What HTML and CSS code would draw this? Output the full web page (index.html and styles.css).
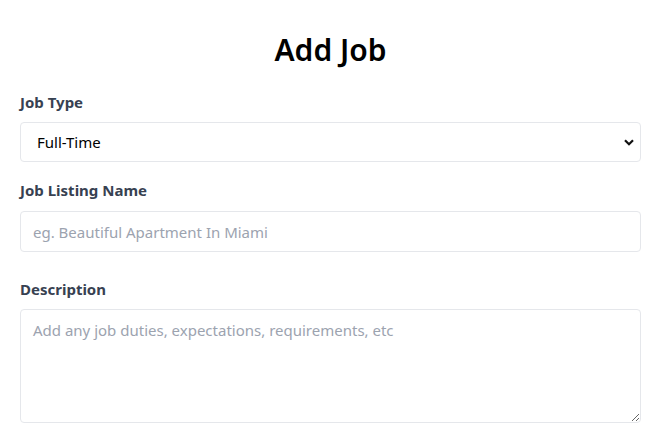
FILE: index.html
```html
<!DOCTYPE html>
<html lang="en">
<head>
<meta charset="utf-8">
<title>Add Job</title>
<link rel="stylesheet" href="styles.css">
</head>
<body>
<main class="page">
  <h1 class="title">Add Job</h1>
  <form class="form">
    <div class="field">
      <label class="label" for="type">Job Type</label>
      <div class="select-wrap">
        <select id="type" class="control select">
          <option>Full-Time</option>
          <option>Part-Time</option>
        </select>
        <svg class="chev" width="10" height="7" viewBox="0 0 10 7"><path d="M1 1.2 L5 5.2 L9 1.2" fill="none" stroke="#111" stroke-width="2.2"/></svg>
      </div>
    </div>
    <div class="field">
      <label class="label" for="name">Job Listing Name</label>
      <input id="name" class="control" placeholder="eg. Beautiful Apartment In Miami">
    </div>
    <div class="field field-desc">
      <label class="label" for="desc">Description</label>
      <textarea id="desc" class="control area" placeholder="Add any job duties, expectations, requirements, etc"></textarea>
    </div>
  </form>
</main>
</body>
</html>
```
FILE: styles.css
```css
html, body { margin: 0; padding: 0; background: #fff; }
body { font-family: "Noto Sans", "Open Sans", sans-serif; color: #111827; }
.page { padding: 0 24px 0 20px; }
.title { margin: 0; padding-top: 30px; text-align: center; font-size: 30px; line-height: 40px; font-weight: 600; color: #000; }
.form { display: flex; flex-direction: column; margin-top: 22px; }
.field { display: flex; flex-direction: column; margin-bottom: 18px; }
.field-desc { margin-top: 9px; }
.label { font-size: 15px; font-weight: 700; color: #374151; line-height: 20px; margin-bottom: 10px; }
.field:nth-child(2) .label { margin-bottom: 11px; }
.control { box-sizing: border-box; width: 100%; font: inherit; font-size: 15px; color: #000; border: 1px solid #e5e7eb; border-radius: 4px; background: #fff; padding: 0 12px; height: 41px; outline: none; }
.control::placeholder { color: #9ca3af; }
.select-wrap { position: relative; }
.select { appearance: none; -webkit-appearance: none; padding-left: 16px; height: 40px; }
.chev { position: absolute; right: 7px; top: 17px; pointer-events: none; }
.area { height: 114px; padding: 10px 12px; resize: vertical; display: block; }
```
